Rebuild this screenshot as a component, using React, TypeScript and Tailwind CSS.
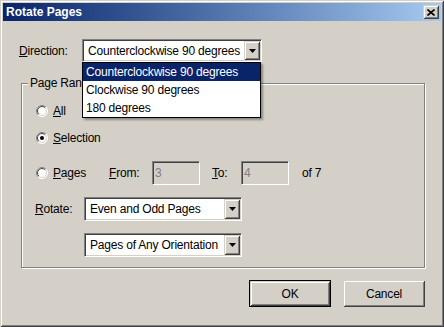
import React from "react";

const sunken =
  "border border-t-[#808080] border-l-[#808080] border-b-white border-r-white shadow-[inset_1px_1px_0_#404040,inset_-1px_-1px_0_#d4d0c8]";
const raised =
  "bg-[#d4d0c8] shadow-[inset_1px_1px_0_#d4d0c8,inset_-1px_-1px_0_#404040,inset_2px_2px_0_#fff,inset_-2px_-2px_0_#808080]";

function Arrow() {
  return (
    <svg width="7" height="4" viewBox="0 0 7 4">
      <path d="M0 0h7L3.5 4z" fill="#000" />
    </svg>
  );
}

function Combo({ text, w, h }: { text: string; w: string; h: string }) {
  return (
    <div className={`${sunken} ${w} ${h} bg-white flex items-center justify-between p-[1px]`}>
      <span className="pl-[4px] leading-none whitespace-nowrap">{text}</span>
      <div className={`${raised} w-[16px] h-full shrink-0 flex items-center justify-center`}>
        <Arrow />
      </div>
    </div>
  );
}

function Radio({ checked }: { checked?: boolean }) {
  const r1 = 5.5;
  const r2 = 4.5;
  const c = 6;
  const d1 = r1 * Math.SQRT1_2;
  const d2 = r2 * Math.SQRT1_2;
  return (
    <svg width="12" height="12" viewBox="0 0 12 12" className="shrink-0">
      <circle cx={c} cy={c} r={r1} fill="#fff" />
      <path d={`M${c - d1} ${c + d1}A${r1} ${r1} 0 0 1 ${c + d1} ${c - d1}`} stroke="#808080" fill="none" />
      <path d={`M${c + d1} ${c - d1}A${r1} ${r1} 0 0 1 ${c - d1} ${c + d1}`} stroke="#fff" fill="none" />
      <path d={`M${c - d2} ${c + d2}A${r2} ${r2} 0 0 1 ${c + d2} ${c - d2}`} stroke="#404040" fill="none" />
      <path d={`M${c + d2} ${c - d2}A${r2} ${r2} 0 0 1 ${c - d2} ${c + d2}`} stroke="#d4d0c8" fill="none" />
      {checked && <circle cx={c} cy={c} r={2} fill="#000" />}
    </svg>
  );
}

function RadioRow({ label, rest, checked }: { label: string; rest: string; checked?: boolean }) {
  return (
    <div className="flex items-center gap-[5px]">
      <Radio checked={checked} />
      <span>
        <u>{label}</u>
        {rest}
      </span>
    </div>
  );
}

function Field({ value }: { value: string }) {
  return (
    <div className={`${sunken} w-[48px] h-[24px] bg-[#d4d0c8] text-[#808080] flex items-center pl-[2px]`}>
      {value}
    </div>
  );
}

export default function App() {
  return (
    <div className="w-[444px] h-[327px] bg-[#d4d0c8] p-[3px] font-['Liberation_Sans',Arial,sans-serif] text-[12px] tracking-[-0.2px] text-black shadow-[inset_1px_1px_0_#d4d0c8,inset_-1px_-1px_0_#404040,inset_2px_2px_0_#fff,inset_-2px_-2px_0_#808080]">
      <div className="h-[18px] flex items-center justify-between pl-[3px] pr-[2px] bg-gradient-to-r from-[#0a246a] to-[#a6caf0]">
        <span className="font-bold text-white tracking-normal">Rotate Pages</span>
        <div className={`${raised} w-[16px] h-[14px] flex items-center justify-center`}>
          <svg width="8" height="7" viewBox="0 0 8 7">
            <path d="M0.5 0.5l7 6M7.5 0.5l-7 6" stroke="#000" strokeWidth="1.6" />
          </svg>
        </div>
      </div>

      <div className="relative pt-[18px]">
        <div className="flex items-center pl-[16px]">
          <span className="w-[63px]">
            <u>D</u>irection:
          </span>
          <Combo text="Counterclockwise 90 degrees" w="w-[180px]" h="h-[23px]" />
        </div>

        <div className="absolute z-10 left-[79px] top-[41px] w-[179px] h-[56px] bg-white border border-black shadow-[2px_2px_2px_rgba(0,0,0,0.35)] whitespace-nowrap">
          <div className="h-[18px] flex items-center pl-[3px] bg-[#0a246a] text-white">Counterclockwise 90 degrees</div>
          <div className="h-[18px] flex items-center pl-[3px]">Clockwise 90 degrees</div>
          <div className="h-[18px] flex items-center pl-[3px]">180 degrees</div>
        </div>

        <div className="relative ml-[18px] mt-[21px] w-[404px] h-[185px] border border-[#808080] shadow-[inset_1px_1px_0_#fff,1px_1px_0_#fff] pt-[19px] pl-[14px]">
          <span className="absolute left-[6px] -top-[8px] bg-[#d4d0c8] px-[2px] leading-[14px] whitespace-nowrap">Page Range</span>

          <div className="h-[16px] flex items-center">
            <RadioRow label="A" rest="ll" />
          </div>
          <div className="h-[16px] mt-[11px] flex items-center">
            <RadioRow label="S" rest="election" checked />
          </div>
          <div className="h-[24px] mt-[15px] flex items-center">
            <div className="w-[73px]">
              <RadioRow label="P" rest="ages" />
            </div>
            <span className="w-[43px]">
              <u>F</u>rom:
            </span>
            <Field value="3" />
            <span className="w-[29px] ml-[12px]">
              <u>T</u>o:
            </span>
            <Field value="4" />
            <span className="ml-[13px]">of 7</span>
          </div>
          <div className="h-[24px] mt-[12px] flex items-center -ml-[1px]">
            <span className="w-[49px]">
              <u>R</u>otate:
            </span>
            <Combo text="Even and Odd Pages" w="w-[158px]" h="h-[24px]" />
          </div>
          <div className="h-[24px] mt-[12px] flex items-center ml-[48px]">
            <Combo text="Pages of Any Orientation" w="w-[158px]" h="h-[24px]" />
          </div>
        </div>

        <div className="flex justify-end gap-[12px] mt-[12px] pr-[16px]">
          <div className="w-[82px] h-[27px] border border-black">
            <div className={`${raised} w-full h-full flex items-center justify-center`}>OK</div>
          </div>
          <div className={`${raised} w-[82px] h-[27px] flex items-center justify-center`}>Cancel</div>
        </div>
      </div>
    </div>
  );
}
